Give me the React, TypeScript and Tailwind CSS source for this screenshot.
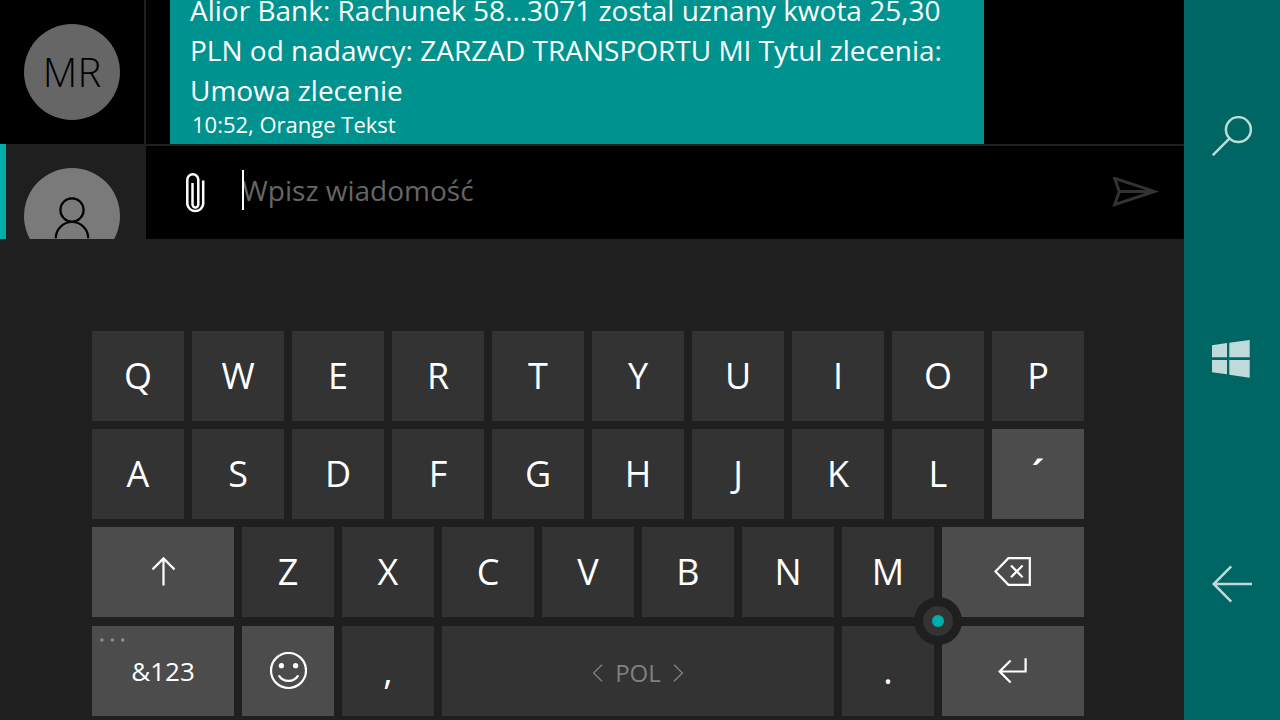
import React from 'react';
import clsx from 'clsx';

interface KeyProps {
  label: string;
  span?: 2 | 3 | 8;
  light?: boolean;
  size?: string;
  className?: string;
  children?: React.ReactNode;
}

const SPANS = {
  2: 'col-span-2',
  3: 'col-span-3',
  8: 'col-span-8',
};

const Key: React.FC<KeyProps> = ({ label, span = 2, light, size = 'text-4xl', className, children }) => (
  <button
    type="button"
    aria-label={label}
    className={clsx(
      'relative flex h-[90px] items-center justify-center text-white',
      size,
      SPANS[span],
      light ? 'bg-[#4c4c4c]' : 'bg-[#333333]',
      className
    )}
  >
    {children ?? label}
  </button>
);

const PersonIcon = () => (
  <svg width="36" height="42" viewBox="0 0 36 42" fill="none" stroke="#000" strokeWidth="2.2">
    <circle cx="18" cy="13" r="11.6" />
    <path d="M1.8 41.2a16.2 16.2 0 0 1 32.4 0" />
  </svg>
);

const ClipIcon = () => (
  <svg width="19" height="40" viewBox="0 0 19 40" fill="none" stroke="#fff" strokeWidth="2.5">
    <path d="M17.2 7.5V31a8 8 0 0 1-15.9 0V6.8a5.5 5.5 0 0 1 11 0V31.5a2.9 2.9 0 0 1-5.8 0V10" />
  </svg>
);

const SendIcon = () => (
  <svg width="48" height="32" viewBox="0 0 48 32" fill="none" stroke="#333" strokeWidth="3">
    <path d="M2.7 1.4 42.5 14.4 2.7 27.6 7.3 14.4ZM7.3 14.4H42.5" />
  </svg>
);

const SearchIcon = () => (
  <svg width="40" height="40" viewBox="0 0 40 40" fill="none" stroke="#c0dada" strokeWidth="2.5">
    <circle cx="26.4" cy="13.6" r="12.5" />
    <path d="M17.4 22.6.8 39.2" />
  </svg>
);

const WindowsIcon = () => (
  <svg width="40" height="40" viewBox="0 0 40 40" fill="#c0dada">
    <path d="M0 5.2 15 3.1V17.2H0ZM17.3 2.8 37.7 0V17.2H17.3ZM0 20H15V34.3L0 32.2ZM17.3 20H37.7V37.7L17.3 34.7Z" />
  </svg>
);

const BackIcon = () => (
  <svg width="40" height="40" viewBox="0 0 40 40" fill="none" stroke="#c0dada" strokeWidth="2.5">
    <path d="M40 20H1.8M19.2 2.4 1.7 20 19.2 37.6" />
  </svg>
);

const ShiftIcon = () => (
  <svg width="24" height="30" viewBox="0 0 24 30" fill="none" stroke="#fff" strokeWidth="2.2">
    <path d="M12.5 28.6V1.6M1.5 12.4 12.5 1.4 23.5 12.4" />
  </svg>
);

const BackspaceIcon = () => (
  <svg width="38" height="30" viewBox="0 0 38 30" fill="none" stroke="#fff" strokeWidth="2.2">
    <path d="M1.5 14.5 14.4 1.2H35.8V27.8H14.4ZM17 8.5 28.6 20.3M28.6 8.5 17 20.3" />
  </svg>
);

const EnterIcon = () => (
  <svg width="30" height="26" viewBox="0 0 30 26" fill="none" stroke="#fff" strokeWidth="2.2">
    <path d="M27.6.3V13.5H1.8M12.6 2.4 1.6 13.5 12.6 24.6" />
  </svg>
);

const SmileIcon = () => (
  <svg width="38" height="38" viewBox="0 0 38 38" fill="none" stroke="#fff" strokeWidth="2.2">
    <circle cx="19.5" cy="18.5" r="17.5" />
    <circle cx="12.4" cy="13.7" r="2.6" fill="#fff" stroke="none" />
    <circle cx="26.6" cy="13.7" r="2.6" fill="#fff" stroke="none" />
    <path d="M9.7 23.3c4.6 7.4 15 7.4 19.6 0" />
  </svg>
);

const Chevron = ({ d }: { d: string }) => (
  <svg width="11" height="18" viewBox="0 0 11 18" fill="none" stroke="#808080" strokeWidth="1.3">
    <path d={d} />
  </svg>
);

const Keyboard = () => (
  <section
    aria-label="Klawiatura"
    className="grid flex-1 grid-cols-20 grid-rows-[90px_90px_91px_90px] content-start items-start gap-2 bg-[#1f1f1f] pt-[92px] pr-[100px] pb-1 pl-[92px]"
  >
    {'QWERTYUIOP'.split('').map((c) => (
      <Key key={c} label={c} />
    ))}

    {'ASDFGHJKL'.split('').map((c) => (
      <Key key={c} label={c} />
    ))}
    <Key label="´" light size="text-[40px]" className="font-semibold" />

    <Key label="Shift" span={3} light>
      <ShiftIcon />
    </Key>
    {'ZXCVBN'.split('').map((c) => (
      <Key key={c} label={c} />
    ))}
    <div className="relative z-10 col-span-2 grid">
      <Key label="M" />
      {/* cursor stick sits over the corner of four keys */}
      <button
        type="button"
        aria-label="Kursor"
        className="absolute -right-7 -bottom-7 flex size-12 items-center justify-center rounded-full bg-[#1f1f1f]"
      >
        <span className="flex size-[30px] items-center justify-center rounded-full bg-[#333333]">
          <span className="size-3 rounded-full bg-[#00adad]" />
        </span>
      </button>
    </div>
    <Key label="Backspace" span={3} light>
      <BackspaceIcon />
    </Key>

    <Key label="&123" span={3} light size="text-[26px]">
      <svg className="absolute top-3 left-2" width="26" height="4" viewBox="0 0 26 4" fill="#8c8c8c">
        <circle cx="1.9" cy="2" r="1.8" />
        <circle cx="12.3" cy="2" r="1.8" />
        <circle cx="22.7" cy="2" r="1.8" />
      </svg>
      &amp;123
    </Key>
    <Key label="Emoji" light>
      <SmileIcon />
    </Key>
    <Key label="," />
    <Key label="Spacja" span={8} size="text-2xl" className="gap-3 pt-1">
      <Chevron d="M10 .8 1.6 9 10 17.2" />
      <span className="text-[#808080]">POL</span>
      <Chevron d="M1 .8 9.4 9 1 17.2" />
    </Key>
    <Key label="." />
    <Key label="Enter" span={3} light>
      <EnterIcon />
    </Key>
  </section>
);

const App: React.FC = () => {
  return (
    <div className="flex min-h-screen bg-black font-['Open_Sans','Noto_Sans',sans-serif] text-white">
      <div className="flex min-w-0 flex-1 flex-col">
        <main className="flex">
          {/* Conversations */}
          <aside className="flex w-[146px] shrink-0 flex-col">
            <button
              type="button"
              className="flex h-36 items-center justify-center border-r-2 border-[#1f1f1f]"
            >
              <span className="flex size-24 items-center justify-center rounded-full bg-[#666666] text-[40px] font-light text-black">
                MR
              </span>
            </button>
            <button
              type="button"
              aria-label="Nowa rozmowa"
              className="flex h-[95px] items-start overflow-hidden border-l-6 border-[#00adad] bg-[#1f1f1f] pt-6 pl-[18px]"
            >
              <span className="flex size-24 shrink-0 items-center justify-center rounded-full bg-[#7a7a7a] pt-1">
                <PersonIcon />
              </span>
            </button>
          </aside>

          {/* Thread */}
          <section className="flex min-w-0 flex-1 flex-col">
            <div className="flex h-36 flex-col justify-end overflow-hidden pr-[200px] pl-6">
              <article className="bg-[#00928f] pr-4 pb-1.5 pl-5">
                <p className="text-[28px] leading-10">
                  Alior Bank: Rachunek 58...3071 zostal uznany kwota 25,30
                  <br />
                  PLN od nadawcy: ZARZAD TRANSPORTU MI Tytul zlecenia:
                  <br />
                  Umowa zlecenie
                </p>
                <p className="px-0.5 text-[22px] leading-7">10:52, Orange Tekst</p>
              </article>
            </div>

            <form className="flex h-[95px] items-center border-t-2 border-[#1f1f1f] pr-6 pl-10">
              <button type="button" aria-label="Dodaj załącznik">
                <ClipIcon />
              </button>
              <div className="relative mb-1.5 ml-[37px] flex-1">
                <input
                  type="text"
                  aria-label="Wiadomość"
                  placeholder="Wpisz wiadomość"
                  className="block h-10 w-full bg-transparent text-[28px] text-white placeholder-[#666666] outline-none"
                />
                <span className="absolute top-0 left-0 h-10 w-0.5 bg-white" />
              </div>
              <button type="button" aria-label="Wyślij">
                <SendIcon />
              </button>
            </form>
          </section>
        </main>

        <Keyboard />
      </div>

      {/* Navigation bar */}
      <nav className="flex w-24 shrink-0 flex-col bg-[#006664] py-6">
        <button type="button" aria-label="Szukaj" className="flex flex-1 items-center justify-center">
          <SearchIcon />
        </button>
        <button type="button" aria-label="Start" className="flex flex-1 items-center justify-center">
          <WindowsIcon />
        </button>
        <button type="button" aria-label="Wstecz" className="flex flex-1 items-center justify-center">
          <BackIcon />
        </button>
      </nav>
    </div>
  );
};

export default App;
